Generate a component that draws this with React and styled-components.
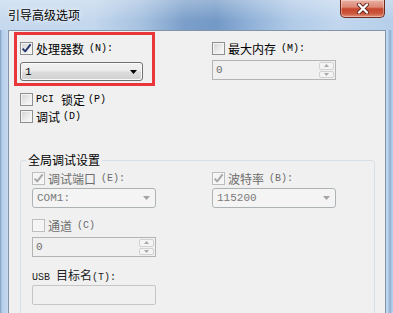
import React from "react";
import styled, { createGlobalStyle } from "styled-components";

const GlobalStyle = createGlobalStyle`
  html, body { margin: 0; padding: 0; }
  body {
    width: 393px; height: 313px; overflow: hidden; background: #bcd3ec;
    font-family: "Noto Sans CJK SC", "Noto Sans", sans-serif;
    font-size: 12px; color: #000;
  }
  * { box-sizing: border-box; }
`;

const Window = styled.div`
  width: 393px;
  height: 313px;
  display: flex;
  flex-direction: column;
  overflow: hidden;
  background: linear-gradient(
    90deg,
    #7f9dc2 0px,
    #b3cdea 2px,
    #c4d8ee 7px,
    #c4d8ee calc(100% - 7px),
    #b8d3f0 calc(100% - 5px),
    #8faacb calc(100% - 3px),
    #b5d0ee calc(100% - 1px)
  );
`;

const TitleBar = styled.div`
  height: 30px;
  flex: none;
  display: flex;
  align-items: flex-start;
  padding: 0 8px;
  background:
    linear-gradient(180deg, rgba(255,255,255,0.28), rgba(255,255,255,0) 70%),
    linear-gradient(90deg, #c6d9ee 0%, #c3d7ed 24%, #a6c1e0 36%, #7b9fca 47%, #7399c6 55%, #91b2d8 64%, #b0cae7 74%, #c2d7ee 86%, #b5cee9 100%);
`;

const Title = styled.span`
  line-height: 30px;
  font-size: 12px;
  color: #000;
  text-shadow: 0 0 6px rgba(255,255,255,0.9), 0 0 2px rgba(255,255,255,0.8);
`;

const CloseButton = styled.div`
  margin-left: auto;
  width: 45px;
  height: 18px;
  border: 1px solid #6f2a20;
  border-top: none;
  border-radius: 0 0 5px 5px;
  background: linear-gradient(180deg, #eab0a2 0%, #dc8874 42%, #c7472f 52%, #cc5639 78%, #e0917a 100%);
  box-shadow: inset 0 0 0 1px rgba(255,255,255,0.35);
  display: flex;
  align-items: center;
  justify-content: center;
`;

const Client = styled.div`
  flex: 1;
  min-height: 0;
  margin: 0 7px 0 8px;
  border: 1px solid #8393a8;
  border-bottom: none;
  background: #f0f0f0;
  display: flex;
  flex-direction: column;
  overflow: hidden;
`;

const TopGrid = styled.div`
  display: grid;
  grid-template-columns: 141px 124px;
  column-gap: 57px;
  padding: 1px 0 0 5px;
  align-items: start;
`;

const Highlight = styled.div`
  border: 3px solid #e8363b;
  padding: 7px 0 2px 3px;
  display: flex;
  flex-direction: column;
  gap: 7px;
`;

const Field = styled.div`
  display: flex;
  flex-direction: column;
  gap: ${(p) => p.$gap ?? 3}px;
  padding-top: ${(p) => p.$top ?? 0}px;
`;

const CheckList = styled.div`
  display: flex;
  flex-direction: column;
  gap: 4px;
  padding-left: 11px;
  margin-top: 7px;
`;

const Row = styled.label`
  display: flex;
  align-items: center;
  gap: 3px;
  height: 13px;
  font-size: 12px;
  line-height: 13px;
  white-space: nowrap;
  color: ${(p) => (p.$disabled ? "#6d6d6d" : "#000")};
`;

const TextLabel = styled.div`
  height: 14px;
  line-height: 14px;
  font-size: 12px;
  white-space: nowrap;
  color: #222;
`;

const Latin = styled.span`
  font-family: "Liberation Mono", "DejaVu Sans Mono", monospace;
  font-size: 10px;
  margin: 0 ${(p) => p.$gap ?? 0}px 0 ${(p) => p.$lead ?? 0}px;
`;

const Box = styled.span`
  width: 13px;
  height: 13px;
  flex: none;
  display: flex;
  align-items: center;
  justify-content: center;
  border: 1px solid ${(p) => (p.$disabled ? "#bdbdbd" : "#8e8f8f")};
  background: ${(p) =>
    p.$disabled
      ? "#f4f4f4"
      : "linear-gradient(135deg, #d2d2d2 0%, #eeeeee 60%, #fafafa 100%)"};
  box-shadow: inset 0 0 0 1px ${(p) => (p.$disabled ? "#f7f7f7" : "#f4f4f4")};
`;

const Combo = styled.div`
  width: ${(p) => p.$w ?? 124}px;
  height: ${(p) => p.$h ?? 20}px;
  display: flex;
  align-items: center;
  padding: 0 5px 0 4px;
  border-radius: 3px;
  border: 1px solid ${(p) => (p.$disabled ? "#adb2b5" : "#707070")};
  background: ${(p) =>
    p.$disabled
      ? "#f4f4f4"
      : "linear-gradient(180deg, #f2f2f2 0%, #ebebeb 48%, #dddddd 52%, #cfcfcf 100%)"};
  box-shadow: ${(p) => (p.$disabled ? "none" : "inset 0 0 0 1px #fbfbfb")};
  color: ${(p) => (p.$disabled ? "#7a7a7a" : "#000")};
`;

const Value = styled.span`
  flex: 1;
  font-family: "Liberation Mono", "DejaVu Sans Mono", monospace;
  font-size: 11px;
  line-height: 14px;
  white-space: nowrap;
`;

const Spin = styled.div`
  width: 124px;
  height: 20px;
  display: flex;
  align-items: stretch;
  border: 1px solid #b4b4b4;
  background: #f0f0f0;
  color: #6d6d6d;
`;

const SpinText = styled.span`
  flex: 1;
  display: flex;
  align-items: center;
  padding-left: 3px;
  font-family: "Liberation Mono", "DejaVu Sans Mono", monospace;
  font-size: 11px;
`;

const SpinButtons = styled.div`
  width: 17px;
  display: flex;
  flex-direction: column;
  gap: 1px;
  padding: 1px;
`;

const SpinHalf = styled.div`
  flex: 1;
  display: flex;
  align-items: center;
  justify-content: center;
  border: 1px solid #d2d2d2;
  border-radius: 2px;
  background: #f4f4f4;
`;

const TextBox = styled.div`
  width: 124px;
  height: 20px;
  border: 1px solid #c6c6c6;
  border-radius: 2px;
  background: #f0f0f0;
`;

const Group = styled.fieldset`
  margin: 30px 10px 0 11px;
  padding: 5px 0 30px 11px;
  border: 1px solid #d5dfe5;
  border-radius: 3px;
  min-width: 0;
`;

const Legend = styled.legend`
  padding: 0 2px;
  margin-left: -6px;
  font-size: 12px;
  line-height: 14px;
  color: #000;
`;

const GroupGrid = styled.div`
  display: grid;
  grid-template-columns: 124px 124px;
  column-gap: 56px;
`;

const GroupSection = styled.div`
  margin-top: 11px;
`;

function Check({ checked, disabled }) {
  return (
    <Box $disabled={disabled}>
      {checked && (
        <svg width="11" height="11" viewBox="0 0 11 11">
          <path
            d="M1.6 5.6 L4.2 8.4 L9.6 1.4"
            fill="none"
            stroke={disabled ? "#a6a6a6" : "#22386b"}
            strokeWidth="1.9"
            strokeLinejoin="round"
          />
        </svg>
      )}
    </Box>
  );
}

function Arrow({ color }) {
  return (
    <svg width="7" height="4" viewBox="0 0 7 4">
      <polygon points="0,0 7,0 3.5,4" fill={color} />
    </svg>
  );
}

function SpinBox({ value }) {
  return (
    <Spin>
      <SpinText>{value}</SpinText>
      <SpinButtons>
        <SpinHalf>
          <svg width="5" height="3" viewBox="0 0 5 3">
            <polygon points="2.5,0 5,3 0,3" fill="#a9a9a9" />
          </svg>
        </SpinHalf>
        <SpinHalf>
          <svg width="5" height="3" viewBox="0 0 5 3">
            <polygon points="0,0 5,0 2.5,3" fill="#a9a9a9" />
          </svg>
        </SpinHalf>
      </SpinButtons>
    </Spin>
  );
}

export default function App() {
  return (
    <>
      <GlobalStyle />
      <Window>
        <TitleBar>
          <Title>引导高级选项</Title>
          <CloseButton>
            <svg width="14" height="11" viewBox="0 0 14 11">
              <path d="M3 1.5 L11 9.5 M11 1.5 L3 9.5" stroke="#5b2219" strokeWidth="4" strokeLinecap="round" />
              <path d="M3 1.5 L11 9.5 M11 1.5 L3 9.5" stroke="#ffffff" strokeWidth="2.4" strokeLinecap="round" />
            </svg>
          </CloseButton>
        </TitleBar>
        <Client>
          <TopGrid>
            <Highlight>
              <Row>
                <Check checked />
                处理器数<Latin $lead={2}>(N):</Latin>
              </Row>
              <Combo $w={123} $h={19}>
                <Value>1</Value>
                <Arrow color="#000" />
              </Combo>
            </Highlight>
            <Field $top={10} $gap={5}>
              <Row>
                <Check />
                最大内存<Latin $lead={2}>(M):</Latin>
              </Row>
              <SpinBox value="0" />
            </Field>
          </TopGrid>
          <CheckList>
            <Row>
              <Check />
              <Latin $gap={4}>PCI</Latin>锁定<Latin>(P)</Latin>
            </Row>
            <Row>
              <Check />
              调试<Latin>(D)</Latin>
            </Row>
          </CheckList>
          <Group>
            <Legend>全局调试设置</Legend>
            <GroupGrid>
              <Field $gap={3}>
                <Row $disabled>
                  <Check checked disabled />
                  调试端口<Latin $lead={2}>(E):</Latin>
                </Row>
                <Combo $disabled>
                  <Value>COM1:</Value>
                  <Arrow color="#a3a3a3" />
                </Combo>
              </Field>
              <Field $gap={3}>
                <Row $disabled>
                  <Check checked disabled />
                  波特率<Latin $lead={2}>(B):</Latin>
                </Row>
                <Combo $disabled>
                  <Value>115200</Value>
                  <Arrow color="#a3a3a3" />
                </Combo>
              </Field>
            </GroupGrid>
            <GroupSection>
              <Field $gap={5}>
                <Row $disabled>
                  <Check disabled />
                  通道<Latin $lead={2}>(C)</Latin>
                </Row>
                <SpinBox value="0" />
              </Field>
            </GroupSection>
            <GroupSection>
              <Field $gap={3}>
                <TextLabel>
                  <Latin $gap={6}>USB</Latin>目标名<Latin>(T):</Latin>
                </TextLabel>
                <TextBox />
              </Field>
            </GroupSection>
          </Group>
        </Client>
      </Window>
    </>
  );
}
